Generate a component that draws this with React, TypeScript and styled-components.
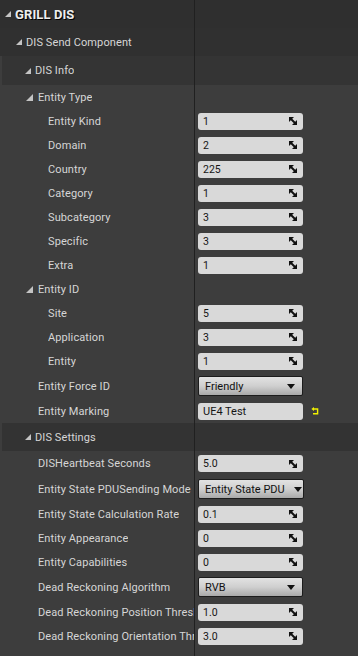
import React from "react";
import styled, { createGlobalStyle } from "styled-components";

const GlobalStyle = createGlobalStyle`
  html, body {
    margin: 0;
    padding: 0;
    background: #3d3d3d;
  }
  body {
    font-family: Roboto, "Noto Sans", "DejaVu Sans", sans-serif;
  }
`;

const NAME_WIDTH = 194;

const Panel = styled.div`
  width: 358px;
  height: 656px;
  overflow: hidden;
  background: #3d3d3d;
  display: flex;
  flex-direction: column;
`;

const Row = styled.div<{ $height: number; $bg?: string; $inset?: number }>`
  display: flex;
  flex-shrink: 0;
  height: ${(p) => p.$height}px;
  background: ${(p) => p.$bg || "transparent"};
  margin-left: ${(p) => p.$inset || 0}px;
`;

const NameCell = styled.div<{ $indent: number; $inset?: number }>`
  width: ${(p) => NAME_WIDTH - (p.$inset || 0)}px;
  flex-shrink: 0;
  box-sizing: border-box;
  padding-left: ${(p) => p.$indent}px;
  display: flex;
  align-items: center;
  overflow: hidden;
  white-space: nowrap;
`;

const Divider = styled.div`
  width: 1px;
  flex-shrink: 0;
  background: #202020;
`;

const ValueCell = styled.div`
  flex: 1;
  padding-left: 3px;
  display: flex;
  align-items: center;
`;

const Expander = styled.span<{ $size?: number }>`
  display: inline-block;
  width: 0;
  height: 0;
  border-left: ${(p) => p.$size || 6}px solid transparent;
  border-bottom: ${(p) => p.$size || 6}px solid #c4c4c4;
  margin-right: ${(p) => (p.$size === 7 ? 5 : 4)}px;
  flex-shrink: 0;
`;

const Title = styled.span`
  font-size: 13px;
  font-weight: 700;
  color: #eeeeee;
  text-shadow: 1px 1px 0 #000;
  letter-spacing: 0.1px;
`;

const Label = styled.span`
  font-size: 11px;
  color: #d6d6d6;
  letter-spacing: 0.1px;
  overflow: hidden;
  text-overflow: clip;
`;

const SpinField = styled.div`
  width: 105px;
  height: 17px;
  box-sizing: border-box;
  background: #d9d9d9;
  border-radius: 3px;
  display: flex;
  align-items: center;
  padding: 0 6px 0 5px;
  font-size: 10.5px;
  color: #151515;
`;

const SpinText = styled.span`
  flex: 1;
`;

const Combo = styled.div<{ $tight?: boolean }>`
  width: ${(p) => (p.$tight ? 106 : 105)}px;
  height: 20px;
  box-sizing: border-box;
  border: 1px solid #1c1c1c;
  border-radius: 2px;
  background: linear-gradient(#e2e2e2 0%, #cfcfcf 50%, #a9a9a9 100%);
  display: flex;
  align-items: center;
  padding: 0 ${(p) => (p.$tight ? 1 : 7)}px 0 6px;
  font-size: 11px;
  color: #111;
`;

const ComboText = styled.span`
  flex: 1;
  white-space: nowrap;
`;

const ComboArrow = styled.span`
  width: 0;
  height: 0;
  border-left: 4.5px solid transparent;
  border-right: 4.5px solid transparent;
  border-top: 5px solid #111;
  flex-shrink: 0;
`;

const TextField = styled.div`
  width: 105px;
  height: 17px;
  box-sizing: border-box;
  background: #d9d9d9;
  border-radius: 3px;
  display: flex;
  align-items: center;
  padding-left: 5px;
  font-size: 11px;
  color: #151515;
`;

const ResetIcon = styled.svg`
  margin-left: 8px;
  flex-shrink: 0;
`;

const SpinIcon = () => (
  <svg width="8" height="8" viewBox="0 0 8 8">
    <path d="M0 0H5L0 5Z" fill="#111" />
    <path d="M8 8H3L8 3Z" fill="#111" />
    <path d="M1 1L7 7" stroke="#111" strokeWidth="2" />
  </svg>
);

const Spin = ({ value }: { value: string }) => (
  <SpinField>
    <SpinText>{value}</SpinText>
    <SpinIcon />
  </SpinField>
);

const Dropdown = ({ value, tight }: { value: string; tight?: boolean }) => (
  <Combo $tight={tight}>
    <ComboText>{value}</ComboText>
    <ComboArrow />
  </Combo>
);

type Category = {
  kind: "category";
  name: string;
  height: number;
  indent: number;
  bg?: string;
  inset?: number;
  title?: boolean;
  big?: boolean;
};

type Prop = {
  kind: "prop";
  name: string;
  height: number;
  indent: number;
  value: React.ReactNode;
};

type Item = Category | Prop;

const spin = (v: string) => <Spin value={v} />;

const items: Item[] = [
  { kind: "category", name: "GRILL DIS", height: 28, indent: 5, bg: "#2f2f2f", title: true },
  { kind: "category", name: "DIS Send Component", height: 28, indent: 16, bg: "#303030" },
  { kind: "category", name: "DIS Info", height: 29, indent: 23, bg: "#343434", inset: 2 },
  { kind: "category", name: "Entity Type", height: 24, indent: 26, big: true },
  { kind: "prop", name: "Entity Kind", height: 24, indent: 48, value: spin("1") },
  { kind: "prop", name: "Domain", height: 24, indent: 48, value: spin("2") },
  { kind: "prop", name: "Country", height: 24, indent: 48, value: spin("225") },
  { kind: "prop", name: "Category", height: 24, indent: 48, value: spin("1") },
  { kind: "prop", name: "Subcategory", height: 24, indent: 48, value: spin("3") },
  { kind: "prop", name: "Specific", height: 24, indent: 48, value: spin("3") },
  { kind: "prop", name: "Extra", height: 24, indent: 48, value: spin("1") },
  { kind: "category", name: "Entity ID", height: 24, indent: 26, big: true },
  { kind: "prop", name: "Site", height: 24, indent: 48, value: spin("5") },
  { kind: "prop", name: "Application", height: 24, indent: 48, value: spin("3") },
  { kind: "prop", name: "Entity", height: 24, indent: 48, value: spin("1") },
  { kind: "prop", name: "Entity Force ID", height: 26, indent: 38, value: <Dropdown value="Friendly" /> },
  {
    kind: "prop",
    name: "Entity Marking",
    height: 24,
    indent: 38,
    value: (
      <>
        <TextField>UE4 Test</TextField>
        <ResetIcon width="8" height="8" viewBox="0 0 8 8">
          <path d="M3 0L0.4 2L3 4Z" fill="#f2f200" />
          <path d="M2 2H6.6V6.8H2" stroke="#f2f200" strokeWidth="1.4" fill="none" />
        </ResetIcon>
      </>
    ),
  },
  { kind: "category", name: "DIS Settings", height: 28, indent: 23, bg: "#333333", inset: 2 },
  { kind: "prop", name: "DISHeartbeat Seconds", height: 25, indent: 38, value: spin("5.0") },
  {
    kind: "prop",
    name: "Entity State PDUSending Mode",
    height: 26,
    indent: 38,
    value: <Dropdown value="Entity State PDU" tight />,
  },
  { kind: "prop", name: "Entity State Calculation Rate", height: 24, indent: 38, value: spin("0.1") },
  { kind: "prop", name: "Entity Appearance", height: 24, indent: 38, value: spin("0") },
  { kind: "prop", name: "Entity Capabilities", height: 24, indent: 38, value: spin("0") },
  { kind: "prop", name: "Dead Reckoning Algorithm", height: 26, indent: 38, value: <Dropdown value="RVB" /> },
  { kind: "prop", name: "Dead Reckoning Position Threshold", height: 24, indent: 38, value: spin("1.0") },
  { kind: "prop", name: "Dead Reckoning Orientation Threshold", height: 24, indent: 38, value: spin("3.0") },
];

const Filler = styled.div`
  flex: 1;
  display: flex;
`;

const App = () => {
  return (
    <>
      <GlobalStyle />
      <Panel>
        {items.map((item) =>
          item.kind === "category" ? (
            <Row key={item.name} $height={item.height} $bg={item.bg} $inset={item.inset}>
              <NameCell $indent={item.indent} $inset={item.inset}>
                <Expander $size={item.big ? 7 : 6} />
                {item.title ? <Title>{item.name}</Title> : <Label>{item.name}</Label>}
              </NameCell>
              <Divider />
              <ValueCell />
            </Row>
          ) : (
            <Row key={item.name} $height={item.height}>
              <NameCell $indent={item.indent}>
                <Label>{item.name}</Label>
              </NameCell>
              <Divider />
              <ValueCell>{item.value}</ValueCell>
            </Row>
          )
        )}
        <Filler>
          <NameCell $indent={0} />
          <Divider />
        </Filler>
      </Panel>
    </>
  );
};

export default App;
